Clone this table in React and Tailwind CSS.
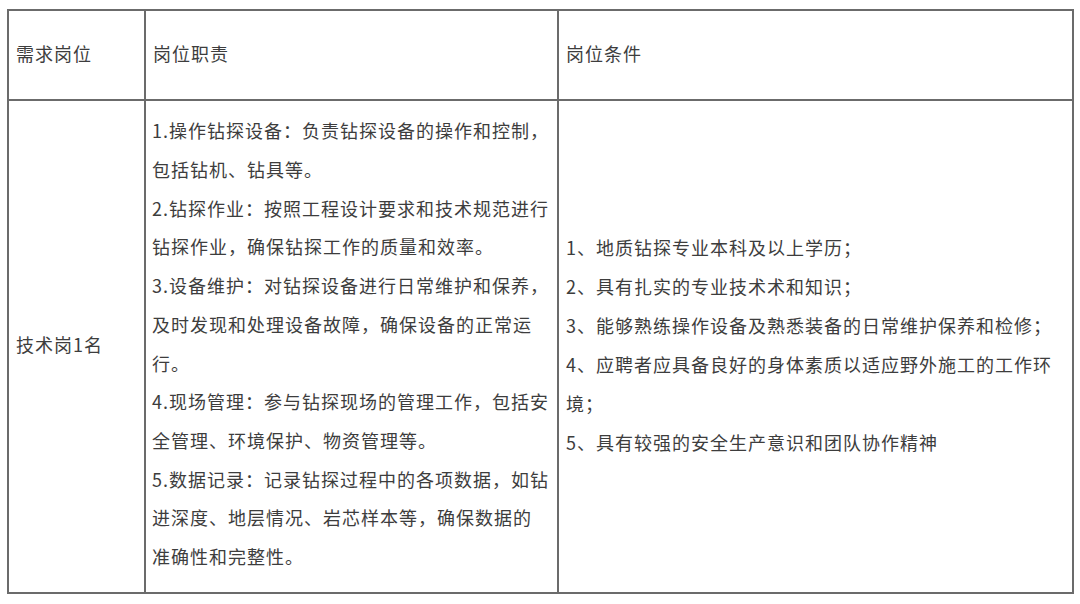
const duties = [
  "1.操作钻探设备：负责钻探设备的操作和控制，包括钻机、钻具等。",
  "2.钻探作业：按照工程设计要求和技术规范进行钻探作业，确保钻探工作的质量和效率。",
  "3.设备维护：对钻探设备进行日常维护和保养，及时发现和处理设备故障，确保设备的正常运行。",
  "4.现场管理：参与钻探现场的管理工作，包括安全管理、环境保护、物资管理等。",
];

const requirements = [
  "1、地质钻探专业本科及以上学历；",
  "2、具有扎实的专业技术术和知识；",
  "3、能够熟练操作设备及熟悉装备的日常维护保养和检修；",
  "4、应聘者应具备良好的身体素质以适应野外施工的工作环境；",
  "5、具有较强的安全生产意识和团队协作精神",
];

export default function App() {
  return (
    <div
      className="w-[1080px] h-[604px] bg-white overflow-hidden pt-[9px] pl-[7px]"
      style={{ fontFamily: '"Noto Sans CJK SC", "Noto Sans", sans-serif' }}
    >
      <table className="table-fixed border-collapse w-[1065px] text-[18px] tracking-[1px] text-[#3d3d3d]">
        <colgroup>
          <col className="w-[137px]" />
          <col className="w-[413px]" />
          <col className="w-[515px]" />
        </colgroup>
        <thead>
          <tr className="h-[90px]">
            <td className="border-2 border-[#6b6b6b] px-[7px] pb-[4px] align-middle">需求岗位</td>
            <td className="border-2 border-[#6b6b6b] px-[7px] pb-[4px] align-middle">岗位职责</td>
            <td className="border-2 border-[#6b6b6b] px-[7px] pb-[4px] align-middle">岗位条件</td>
          </tr>
        </thead>
        <tbody>
          <tr className="h-[493px]">
            <td className="border-2 border-[#6b6b6b] px-[7px] pb-[4px] align-middle">技术岗1名</td>
            <td className="border-2 border-[#6b6b6b] pl-[6px] pr-[4px] pt-[10px] pb-[16px] align-middle leading-[38.7px]">
              {duties.map((d, i) => (
                <p key={i}>{d}</p>
              ))}
              <p>
                5.数据记录：记录钻探过程中的各项数据，如钻进深度、地层情况、岩芯样本等，确保数据的
                <br />
                准确性和完整性。
              </p>
            </td>
            <td className="border-2 border-[#6b6b6b] pl-[7px] pr-[8px] pb-[4px] align-middle leading-[39px]">
              {requirements.map((r, i) => (
                <p key={i}>{r}</p>
              ))}
            </td>
          </tr>
        </tbody>
      </table>
    </div>
  );
}
